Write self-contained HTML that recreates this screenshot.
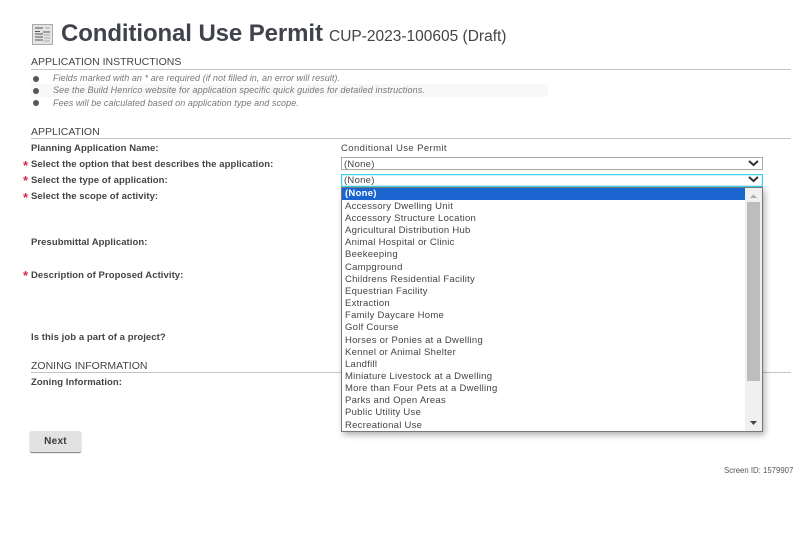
<!DOCTYPE html>
<html><head><meta charset="utf-8"><style>
html,body{margin:0;padding:0;background:#fff;width:803px;height:544px;overflow:hidden}
body{position:relative;font-family:"Liberation Sans",sans-serif;color:#3a3a3a;filter:blur(.25px)}
.t{position:absolute;white-space:nowrap;line-height:12px}
.b{position:absolute}
.h{font-size:10.5px;letter-spacing:0;color:#444}
.l{font-size:9.5px;font-weight:bold;letter-spacing:.07px;color:#444}
.i{font-size:9px;font-style:italic;color:#777;letter-spacing:.07px}
.o{font-size:9.5px;letter-spacing:.27px;color:#444;left:345px}
.r{font-size:13px;color:#d8274a;font-weight:bold}
.d{position:absolute;left:33px;width:6px;height:6px;border-radius:50%;background:#555}
.s{position:absolute;left:341px;width:420px;height:11px;background:#fff;border:1px solid #aaa}
</style></head><body>
<svg class="b" style="left:32px;top:24px" width="21" height="21" viewBox="0 0 21 21">
<rect x=".5" y=".5" width="20" height="20" fill="#e4e4e4" stroke="#aaa"/>
<path d="M3 4h8M3 7.500h5M11 8h7M3 10h8M3 13h8M3 16h8" stroke="#555" stroke-width="1"/>
<path d="M12 11h6M12 14h6M12 17h6M13 4h5" stroke="#aaa" stroke-width="1"/>
</svg>
<div class="t" style="left:61px;top:19px;line-height:30px;font-size:24px;font-weight:bold;color:#40434c;letter-spacing:-.1px">Conditional Use Permit</div>
<div class="t" style="left:329px;top:27px;line-height:20px;font-size:15.5px;color:#444">CUP-2023-100605 (Draft)</div>

<div class="t h" style="left:31px;top:56px">APPLICATION INSTRUCTIONS</div>
<div class="b" style="left:31px;top:69px;width:760px;height:1px;background:#c4c4c4"></div>
<div class="b" style="left:31px;top:84px;width:517px;height:13px;background:#f8f8f8"></div>
<div class="d" style="top:76px"></div><div class="d" style="top:88px"></div><div class="d" style="top:100px"></div>
<div class="t i" style="left:53px;top:72px">Fields marked with an * are required (if not filled in, an error will result).</div>
<div class="t i" style="left:53px;top:84px;letter-spacing:.115px">See the Build Henrico website for application specific quick guides for detailed instructions.</div>
<div class="t i" style="left:53px;top:97px">Fees will be calculated based on application type and scope.</div>

<div class="t h" style="left:31px;top:126px">APPLICATION</div>
<div class="b" style="left:31px;top:138px;width:760px;height:1px;background:#c4c4c4"></div>

<div class="t l" style="left:31px;top:143px">Planning Application Name:</div>
<div class="t l" style="left:31px;top:159px">Select the option that best describes the application:</div>
<div class="t l" style="left:31px;top:175px">Select the type of application:</div>
<div class="t l" style="left:31px;top:191px">Select the scope of activity:</div>
<div class="t l" style="left:31px;top:237px">Presubmittal Application:</div>
<div class="t l" style="left:31px;top:270px">Description of Proposed Activity:</div>
<div class="t l" style="left:31px;top:332px">Is this job a part of a project?</div>
<div class="t r" style="left:23px;top:160px">*</div>
<div class="t r" style="left:23px;top:175px">*</div>
<div class="t r" style="left:23px;top:192px">*</div>
<div class="t r" style="left:23px;top:270px">*</div>

<div class="t" style="left:341px;top:143px;font-size:9.500px;letter-spacing:.4px;color:#444">Conditional Use Permit</div>
<div class="s" style="top:157px"></div>
<div class="t o" style="left:344px;top:159px">(None)</div>
<svg class="b" style="left:748px;top:160px" width="11" height="7"><path d="M1 1l4.500 4 4.500-4" fill="none" stroke="#333" stroke-width="2"/></svg>
<div class="s" style="top:174px;border-color:#3fd4ee;box-shadow:inset 0 0 0 .5px #9fe8f5"></div>
<div class="t o" style="left:344px;top:175px">(None)</div>
<svg class="b" style="left:748px;top:176px" width="11" height="7"><path d="M1 1l4.500 4 4.500-4" fill="none" stroke="#333" stroke-width="2"/></svg>

<div class="t h" style="left:31px;top:360px">ZONING INFORMATION</div>
<div class="b" style="left:31px;top:372px;width:760px;height:1px;background:#c4c4c4"></div>
<div class="t l" style="left:31px;top:377px">Zoning Information:</div>

<div class="b" style="left:30px;top:431px;width:51px;height:21px;background:#e2e2e2;border-radius:2px;box-shadow:0 1px 1px #777"></div>
<div class="t" style="left:30px;width:51px;top:436px;text-align:center;font-size:10px;font-weight:bold;color:#3a3a3a;letter-spacing:.3px">Next</div>

<div class="t" style="left:724px;top:465px;height:10px;overflow:hidden;font-size:7.800px;color:#555">Screen ID: 1579907</div>

<div class="b" style="left:341px;top:187px;width:420px;height:243px;background:#fff;border:1px solid #777;box-shadow:2px 3px 6px rgba(0,0,0,.3)">
<div class="b" style="left:0;top:0;width:403px;height:12px;background:#1a64d0"></div>
<div class="b" style="left:403px;top:0;width:17px;height:243px;background:#f0f0f0"></div>
<div class="b" style="left:405px;top:14px;width:13px;height:179px;background:#bdbdbd"></div>
<svg class="b" style="left:406px;top:5px" width="11" height="6"><path d="M2 5l3.500-3.500L9 5z" fill="#aaa"/></svg>
<svg class="b" style="left:406px;top:232px" width="11" height="6"><path d="M2 1h7L5.500 5z" fill="#444"/></svg>
</div>
<div class="t o" style="top:188px;color:#fff;font-weight:bold">(None)</div>
<div class="t o" style="top:201px">Accessory Dwelling Unit</div>
<div class="t o" style="top:213px">Accessory Structure Location</div>
<div class="t o" style="top:225px">Agricultural Distribution Hub</div>
<div class="t o" style="top:237px">Animal Hospital or Clinic</div>
<div class="t o" style="top:249px">Beekeeping</div>
<div class="t o" style="top:262px">Campground</div>
<div class="t o" style="top:274px">Childrens Residential Facility</div>
<div class="t o" style="top:286px">Equestrian Facility</div>
<div class="t o" style="top:298px">Extraction</div>
<div class="t o" style="top:310px">Family Daycare Home</div>
<div class="t o" style="top:322px">Golf Course</div>
<div class="t o" style="top:335px">Horses or Ponies at a Dwelling</div>
<div class="t o" style="top:347px">Kennel or Animal Shelter</div>
<div class="t o" style="top:359px">Landfill</div>
<div class="t o" style="top:371px">Miniature Livestock at a Dwelling</div>
<div class="t o" style="top:383px">More than Four Pets at a Dwelling</div>
<div class="t o" style="top:395px">Parks and Open Areas</div>
<div class="t o" style="top:407px">Public Utility Use</div>
<div class="t o" style="top:420px">Recreational Use</div>
</body></html>
